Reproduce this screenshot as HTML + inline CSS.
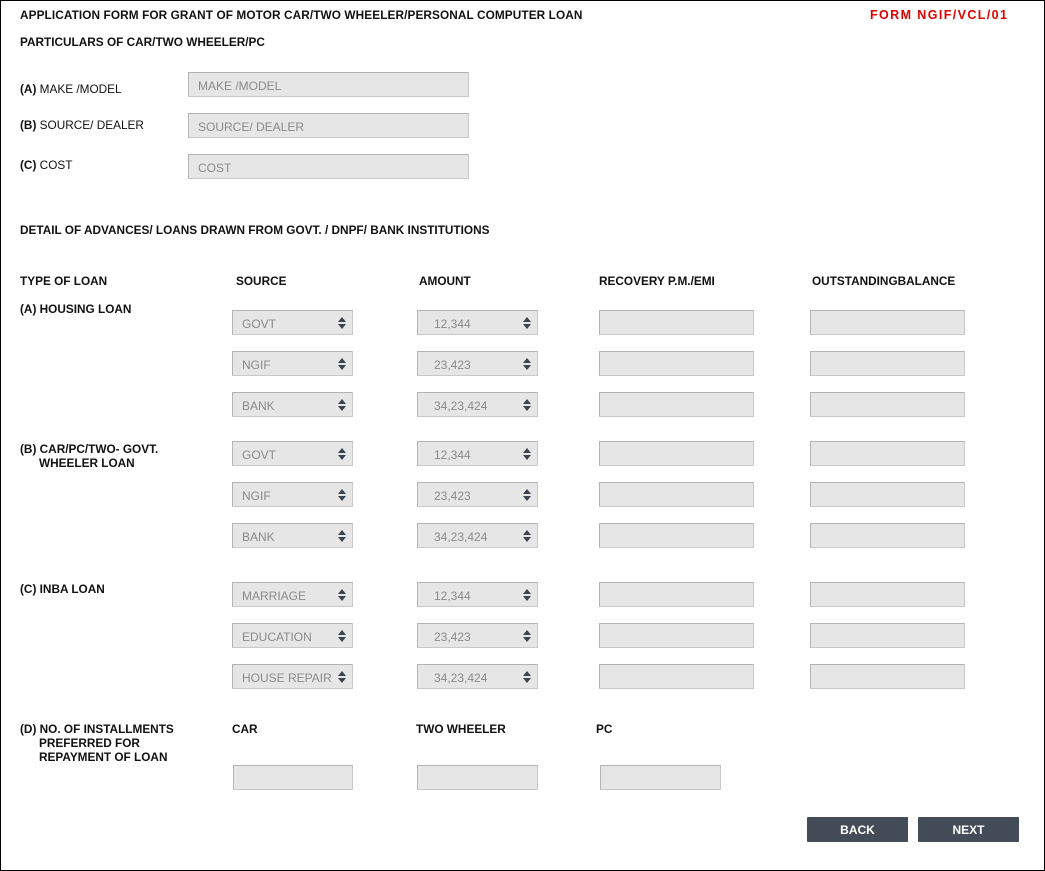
<!DOCTYPE html>
<html><head><style>
*{margin:0;padding:0;box-sizing:border-box}
body{width:1045px;height:871px;background:#fff;font-family:"Liberation Sans",Arial,sans-serif;position:relative;overflow:hidden}
.frame{position:absolute;left:0;top:0;width:1045px;height:871px;border:1px solid #000}
.t{position:absolute;font-size:11.8px;color:#111;white-space:nowrap;line-height:14px;margin-top:1px}
.b{font-weight:bold}
.in{position:absolute;height:25px;background:#e6e6e6;border:1px solid #c8c8c8;border-top-color:#b4b4b4;border-left-color:#b4b4b4;font-size:12px;color:#8a8a8a;padding-left:9px;line-height:26px}
.sp::after{content:"";position:absolute;right:6px;top:6px;border-left:4px solid transparent;border-right:4px solid transparent;border-bottom:5px solid #3c4450}
.sp::before{content:"";position:absolute;right:6px;top:13px;border-left:4px solid transparent;border-right:4px solid transparent;border-top:5px solid #3c4450}
.btn{position:absolute;width:101px;height:25px;background:#444c57;color:#fff;font-weight:bold;font-size:12px;text-align:center;line-height:26px;border-radius:1px}
</style></head><body>
<div class="frame"></div>
<div class="t b" style="left:20px;top:7px;letter-spacing:0.1px">APPLICATION FORM FOR GRANT OF MOTOR CAR/TWO WHEELER/PERSONAL COMPUTER LOAN</div>
<div class="t b" style="left:870px;top:7px;color:#e00000;font-size:12.5px;letter-spacing:1.4px">FORM NGIF/VCL/01</div>
<div class="t b" style="left:20px;top:34px">PARTICULARS OF CAR/TWO WHEELER/PC</div>

<div class="t" style="left:20px;top:81px"><b>(A)</b> MAKE /MODEL</div>
<div class="t" style="left:20px;top:117px"><b>(B)</b> SOURCE/ DEALER</div>
<div class="t" style="left:20px;top:157px"><b>(C)</b> COST</div>
<div class="in" style="left:188px;top:72px;width:281px">MAKE /MODEL</div>
<div class="in" style="left:188px;top:113px;width:281px">SOURCE/ DEALER</div>
<div class="in" style="left:188px;top:154px;width:281px">COST</div>

<div class="t b" style="left:20px;top:222px">DETAIL OF ADVANCES/ LOANS DRAWN FROM GOVT. / DNPF/ BANK INSTITUTIONS</div>

<div class="t b" style="left:20px;top:273px">TYPE OF LOAN</div>
<div class="t b" style="left:236px;top:273px">SOURCE</div>
<div class="t b" style="left:419px;top:273px">AMOUNT</div>
<div class="t b" style="left:599px;top:273px">RECOVERY P.M./EMI</div>
<div class="t b" style="left:812px;top:273px">OUTSTANDINGBALANCE</div>

<div class="t b" style="left:20px;top:301px">(A) HOUSING LOAN</div>
<div class="t b" style="left:20px;top:441px">(B) CAR/PC/TWO- GOVT.</div>
<div class="t b" style="left:39px;top:455px">WHEELER LOAN</div>
<div class="t b" style="left:20px;top:581px">(C) INBA LOAN</div>

<div class="in sp" style="left:232px;top:310px;width:121px">GOVT</div>
<div class="in sp" style="left:232px;top:351px;width:121px">NGIF</div>
<div class="in sp" style="left:232px;top:392px;width:121px">BANK</div>
<div class="in sp" style="left:232px;top:441px;width:121px">GOVT</div>
<div class="in sp" style="left:232px;top:482px;width:121px">NGIF</div>
<div class="in sp" style="left:232px;top:523px;width:121px">BANK</div>
<div class="in sp" style="left:232px;top:582px;width:121px">MARRIAGE</div>
<div class="in sp" style="left:232px;top:623px;width:121px">EDUCATION</div>
<div class="in sp" style="left:232px;top:664px;width:121px">HOUSE REPAIR</div>

<div class="in sp" style="left:417px;top:310px;width:121px;padding-left:16px">12,344</div>
<div class="in sp" style="left:417px;top:351px;width:121px;padding-left:16px">23,423</div>
<div class="in sp" style="left:417px;top:392px;width:121px;padding-left:16px">34,23,424</div>
<div class="in sp" style="left:417px;top:441px;width:121px;padding-left:16px">12,344</div>
<div class="in sp" style="left:417px;top:482px;width:121px;padding-left:16px">23,423</div>
<div class="in sp" style="left:417px;top:523px;width:121px;padding-left:16px">34,23,424</div>
<div class="in sp" style="left:417px;top:582px;width:121px;padding-left:16px">12,344</div>
<div class="in sp" style="left:417px;top:623px;width:121px;padding-left:16px">23,423</div>
<div class="in sp" style="left:417px;top:664px;width:121px;padding-left:16px">34,23,424</div>

<div class="in" style="left:599px;top:310px;width:155px"></div>
<div class="in" style="left:599px;top:351px;width:155px"></div>
<div class="in" style="left:599px;top:392px;width:155px"></div>
<div class="in" style="left:599px;top:441px;width:155px"></div>
<div class="in" style="left:599px;top:482px;width:155px"></div>
<div class="in" style="left:599px;top:523px;width:155px"></div>
<div class="in" style="left:599px;top:582px;width:155px"></div>
<div class="in" style="left:599px;top:623px;width:155px"></div>
<div class="in" style="left:599px;top:664px;width:155px"></div>

<div class="in" style="left:810px;top:310px;width:155px"></div>
<div class="in" style="left:810px;top:351px;width:155px"></div>
<div class="in" style="left:810px;top:392px;width:155px"></div>
<div class="in" style="left:810px;top:441px;width:155px"></div>
<div class="in" style="left:810px;top:482px;width:155px"></div>
<div class="in" style="left:810px;top:523px;width:155px"></div>
<div class="in" style="left:810px;top:582px;width:155px"></div>
<div class="in" style="left:810px;top:623px;width:155px"></div>
<div class="in" style="left:810px;top:664px;width:155px"></div>

<div class="t b" style="left:20px;top:721px">(D) NO. OF INSTALLMENTS</div>
<div class="t b" style="left:39px;top:735px">PREFERRED FOR</div>
<div class="t b" style="left:39px;top:749px">REPAYMENT OF LOAN</div>
<div class="t b" style="left:232px;top:721px">CAR</div>
<div class="t b" style="left:416px;top:721px">TWO WHEELER</div>
<div class="t b" style="left:596px;top:721px">PC</div>
<div class="in" style="left:233px;top:765px;width:120px"></div>
<div class="in" style="left:417px;top:765px;width:121px"></div>
<div class="in" style="left:600px;top:765px;width:121px"></div>

<div class="btn" style="left:807px;top:817px">BACK</div>
<div class="btn" style="left:918px;top:817px">NEXT</div>
</body></html>
